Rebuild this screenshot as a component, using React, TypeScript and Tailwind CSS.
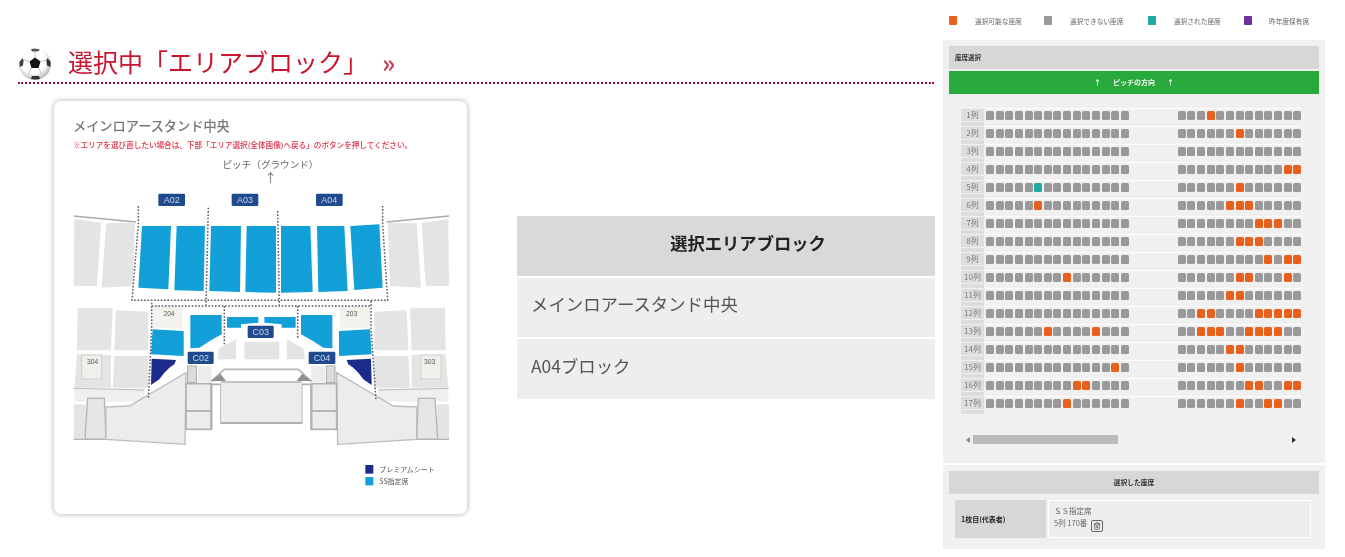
import { Trash2 } from "lucide-react";

const JP = "font-['Noto_Sans_CJK_JP','Noto_Sans',sans-serif]";

// Orange seats per row: [left block, right block], 0 based
const rows: [number[], number[]][] = [
  [[], [3]],
  [[], [6]],
  [[], []],
  [[], [11, 12]],
  [[], [6]],
  [[5], [5, 6, 7]],
  [[], [8, 9, 10]],
  [[], [6, 7, 8]],
  [[], [9, 11, 12]],
  [[8], [6, 7, 11]],
  [[], [5, 6]],
  [[], [2, 3, 8, 9, 10, 11, 12]],
  [[6, 11], [2, 3, 4, 7, 8, 9, 10]],
  [[], [5, 6]],
  [[13], [6]],
  [[9, 10], [7, 8, 11, 12]],
  [[8], [6, 9, 10]],
];

const legend = [
  { color: "bg-[#e8601c]", label: "選択可能な座席", width: "w-[95px]", pad: "pl-[18px]" },
  { color: "bg-[#999999]", label: "選択できない座席", width: "w-[104px]", pad: "pl-[18px]" },
  { color: "bg-[#1fa9a6]", label: "選択された座席", width: "w-[96px]", pad: "pl-[18px]" },
  { color: "bg-[#7030a0]", label: "昨年度保有席", width: "w-[66px]", pad: "pl-[17px]" },
];

const Seat = ({ color }: { color: string }) => (
  <span className={`block w-[8px] h-[9px] rounded-[1.5px] shrink-0 ${color}`} />
);

const SeatRow = ({ no, left, right }: { no: number; left: number[]; right: number[] }) => {
  const seatColor = (block: "l" | "r", i: number) => {
    if (block === "l" && no === 5 && i === 5) return "bg-[#1fa9a6]";
    const list = block === "l" ? left : right;
    return list.includes(i) ? "bg-[#e8601c]" : "bg-[#999999]";
  };

  return (
    <div className="flex h-[18px]">
      <div className="w-[23px] mr-[2px] flex flex-col gap-[1px]">
        <div className="h-[12px] mt-[1px] bg-[#dddddd] text-[8px] leading-[12px] text-center text-[#777777]">
          {no}列
        </div>
        <div className="h-[4px] bg-[#dddddd]" />
      </div>
      <div className="w-[315px] border-t border-white flex pt-[2px] gap-[49px]">
        <div className="flex gap-[1.63px]">
          {Array.from({ length: 15 }).map((_, i) => (
            <Seat key={i} color={seatColor("l", i)} />
          ))}
        </div>
        <div className="flex gap-[1.63px]">
          {Array.from({ length: 13 }).map((_, i) => (
            <Seat key={i} color={seatColor("r", i)} />
          ))}
        </div>
      </div>
    </div>
  );
};

const SoccerBall = () => (
  <svg width="34" height="34" viewBox="0 0 34 34" className="shrink-0">
    <defs>
      <radialGradient id="ball" cx="45%" cy="40%" r="60%">
        <stop offset="0.65" stopColor="#ffffff" />
        <stop offset="1" stopColor="#b5b5b5" />
      </radialGradient>
    </defs>
    <circle cx="17" cy="17" r="16" fill="url(#ball)" />
    <path d="M17 10.5 L22.5 14.5 L20.5 21 L13.5 21 L11.5 14.5 Z" fill="#111" />
    <path d="M13 2 L17 1.4 L22 2.4 L20 4.6 L14 4.6 Z" fill="#555" />
    <path d="M29.5 11 L32.6 15 L32.4 20 L29 18.5 L28.4 13.5 Z" fill="#333" />
    <path d="M4.5 11 L1.4 15 L1.6 20 L5 18.5 L5.6 13.5 Z" fill="#444" />
    <path d="M13 32 L14 29 L21 29 L22 32 L17 32.6 Z" fill="#333" />
    <path d="M17 10.5 L17 5 M22.5 14.5 L28 13 M11.5 14.5 L6 13 M13.5 21 L10.5 27 M20.5 21 L23.5 27" stroke="#aaa" strokeWidth="0.7" />
  </svg>
);

// left half of the stand, drawn again mirrored for the right side
const GRAY = [
  "40,85 120,95 108,285 38,285",
  "135,97 222,95 215,285 122,290",
  "50,350 155,352 150,478 48,478",
  "165,358 262,362 262,478 160,478",
  "48,490 150,492 150,590 40,590",
  "160,495 262,495 262,590 155,590",
  "475,472 525,445 525,505 470,505",
];

const BLUE_TOP = [
  "243,105 330,105 322,295 232,290",
  "347,105 432,105 428,300 340,298",
  "450,105 540,105 537,303 445,300",
  "557,105 645,105 645,305 553,303",
  "660,105 748,105 755,303 660,305",
  "768,105 850,105 860,300 772,303",
  "868,105 955,100 965,290 880,297",
];

const MapLabel = ({ x, y, w, text }: { x: number; y: number; w: number; text: string }) => (
  <g>
    <rect x={x} y={y} width={w} height="37" rx="4" fill="#1f4a8e" />
    <text x={x + w / 2} y={y + 27} textAnchor="middle" fontSize="27" fill="#c8d6ea" fontFamily="Liberation Sans, sans-serif">
      {text}
    </text>
  </g>
);

const HalfStand = () => (
  <g>
    <path d="M38 75 L225 93" stroke="#aaaaaa" strokeWidth="4" fill="none" />
    {GRAY.map((p) => (
      <polygon key={p} points={p} fill="#e4e4e4" />
    ))}
    <rect x="275" y="345" width="90" height="65" fill="#f3f2ec" />
    <polygon points="275,415 368,420 368,495 270,490" fill="#13a0d8" />
    <polygon points="388,372 482,372 482,430 450,448 415,470 388,472" fill="#13a0d8" />
    <polygon points="498,378 592,378 592,395 540,400 540,410 498,410" fill="#13a0d8" />
    <polygon points="272,503 345,507 340,520 325,530 310,545 295,565 270,582" fill="#1c2a8c" />
    <rect x="62" y="492" width="60" height="72" fill="#f0efe9" stroke="#cfcfcf" strokeWidth="3" />

    {/* concourse bands and the corner blocks */}
    <rect x="40" y="592" width="210" height="40" fill="#efefef" />
    <path d="M38 592 L250 597" stroke="#bdbdbd" strokeWidth="3" fill="none" />
    <rect x="38" y="640" width="37" height="105" fill="#e4e4e4" />
    <polygon points="80,622 130,622 135,745 72,745" fill="#e6e6e6" stroke="#b5b5b5" strokeWidth="4" />
    <path d="M38 745 L135 745" stroke="#b5b5b5" strokeWidth="4" />

    <polygon points="135,648 205,645 375,545 372,760 135,745" fill="#ececec" stroke="#bdbdbd" strokeWidth="4" />
    <rect x="410" y="525" width="42" height="48" fill="#ececec" />
    <rect x="380" y="525" width="26" height="50" fill="#dcdcdc" stroke="#aaaaaa" strokeWidth="3" />
    <rect x="375" y="578" width="75" height="82" fill="#ececec" stroke="#b0b0b0" strokeWidth="5" />
    <rect x="375" y="660" width="75" height="55" fill="#ececec" stroke="#b0b0b0" strokeWidth="5" />
    <path d="M452 716 L452 580 L480 580 L480 700" stroke="#b0b0b0" strokeWidth="5" fill="#ffffff" />
    <path d="M450 572 L490 535 L601 535" stroke="#b5b5b5" strokeWidth="5" fill="none" />
    <polygon points="450,570 478,548 495,570" fill="#8f8f8f" />
    <path d="M480 573 L601 573" stroke="#b0b0b0" strokeWidth="5" fill="none" />
  </g>
);

const StadiumMap = () => (
  <svg width="400" height="320" viewBox="0 0 1200 960" className="ml-[7px] shrink-0">
    <HalfStand />
    <g transform="translate(1202 0) scale(-1 1)">
      <HalfStand />
    </g>
    <rect x="480" y="576" width="242" height="120" fill="#ececec" />
    <path d="M480 696 L722 696" stroke="#b0b0b0" strokeWidth="6" />
    <rect x="550" y="452" width="105" height="53" fill="#e4e4e4" />
    {BLUE_TOP.map((p) => (
      <polygon key={p} points={p} fill="#13a0d8" />
    ))}
    <g stroke="#5f5f6a" strokeWidth="4.5" strokeDasharray="5 5" fill="none">
      <path d="M232 45 L232 100 L213 328 L980 328 L965 100 L965 45" />
      <path d="M442 50 L435 342" />
      <path d="M650 60 L655 342" />
      <path d="M272 335 L272 410 L262 625" />
      <path d="M272 345 L930 345" />
      <path d="M930 330 L930 410 L945 628" />
      <path d="M490 345 L490 460" />
      <path d="M710 345 L710 440" />
    </g>
    <MapLabel x={292} y={8} w={80} text="A02" />
    <MapLabel x={512} y={8} w={80} text="A03" />
    <MapLabel x={765} y={8} w={80} text="A04" />
    <MapLabel x={560} y={404} w={78} text="C03" />
    <MapLabel x={380} y={482} w={78} text="C02" />
    <MapLabel x={743} y={482} w={80} text="C04" />
    <g fontSize="20" fill="#555555" textAnchor="middle" fontFamily="Liberation Sans, sans-serif">
      <text x="324" y="375">204</text>
      <text x="872" y="375">203</text>
      <text x="95" y="520">304</text>
      <text x="1106" y="520">303</text>
    </g>
    <rect x="913" y="822" width="24" height="26" fill="#1c2a8c" />
    <rect x="913" y="858" width="24" height="25" fill="#13a0d8" />
    <g fontSize="21" fill="#555555" fontFamily="Noto Sans CJK JP, sans-serif">
      <text x="955" y="843">プレミアムシート</text>
      <text x="955" y="878">SS指定席</text>
    </g>
  </svg>
);

export default function App() {
  return (
    <div className={`flex w-[1345px] h-[557px] overflow-hidden bg-white blur-[0.5px] ${JP}`}>
      {/* left side */}
      <div className="w-[943px] shrink-0 pl-[18px] pt-[47px]">
        <div className="w-[916px] h-[37px] border-b-2 border-dotted border-[#a01030] flex items-start">
          <SoccerBall />
          <h1 className="ml-[16px] -mt-[2px] text-[25px] leading-[32px] text-[#c8162e]">選択中「エリアブロック」</h1>
          <span className="ml-[14px] -mt-[1px] text-[25px] leading-[32px] font-bold text-[#c8405a]">»</span>
        </div>

        <div className="flex items-center ml-[35px] mt-[16px]">
          <div className="w-[415px] h-[415px] shrink-0 flex flex-col rounded-lg border border-[#dddddd] shadow-[0_0_4px_rgba(0,0,0,0.25)]">
            <div className="pl-[19px] pt-[15px] text-[13.2px] leading-[19px] text-[#777777] font-medium">
              メインロアースタンド中央
            </div>
            <div className="pl-[19px] mt-[4px] text-[7.6px] leading-[12px] font-medium text-[#e0304a] whitespace-nowrap">
              ※エリアを選び直したい場合は、下部「エリア選択(全体画像)へ戻る」のボタンを押してください。
            </div>
            <div className="text-center mt-[6px] pl-[20px] text-[9.6px] leading-[14px] text-[#666666]">
              ピッチ（グラウンド）
            </div>
            <div className="text-center pl-[20px] text-[12px] leading-[14px] text-[#666666]">↑</div>
            <div className="mt-[6px]">
              <StadiumMap />
            </div>
          </div>

          <div className="w-[418px] ml-[49px] flex flex-col gap-[2px]">
            <div className="h-[60px] bg-[#d9d9d9] flex items-center justify-center pl-[44px] pb-[6px] text-[17.3px] font-bold text-[#222222]">
              選択エリアブロック
            </div>
            <div className="h-[59px] bg-[#eeeeee] flex items-center pl-[14px] pb-[6px] text-[17.4px] text-[#555555]">
              メインロアースタンド中央
            </div>
            <div className="h-[60px] bg-[#eeeeee] flex items-center pl-[14px] pb-[6px] text-[17.4px] text-[#555555]">
              A04ブロック
            </div>
          </div>
        </div>
      </div>

      {/* right side */}
      <div className="w-[382px] shrink-0">
        <div className="h-[40px] flex items-center pl-[6px] pt-[2px]">
          {legend.map((item) => (
            <div key={item.label} className={`flex items-center ${item.width} shrink-0`}>
              <span className={`block w-[8px] h-[9px] rounded-[1px] shrink-0 ${item.color}`} />
              <span className={`${item.pad} text-[6.7px] text-[#666666] whitespace-nowrap`}>{item.label}</span>
            </div>
          ))}
        </div>

        <div className="h-[423px] bg-[#f0f0f0] px-[6px] pt-[6px]">
          <div className="h-[23px] bg-[#d7d7d7] flex items-center pl-[6px] text-[6.5px] font-bold text-[#333333]">
            座席選択
          </div>
          <div className="h-[23px] mt-[2px] bg-[#28a93b] flex items-center justify-center gap-[12px] text-[7px] font-bold text-white">
            <span>↑</span>
            <span>ピッチの方向</span>
            <span>↑</span>
          </div>
          <div className="mt-[14px] ml-[12px]">
            {rows.map(([left, right], i) => (
              <SeatRow key={i} no={i + 1} left={left} right={right} />
            ))}
          </div>
          <div className="mt-[21px] ml-[17px] h-[9px] w-[330px] flex items-center">
            <span className="w-0 h-0 border-y-[3px] border-y-transparent border-r-[4px] border-r-[#888888]" />
            <span className="ml-[3px] w-[145px] h-[9px] bg-[#bbbbbb]" />
            <span className="ml-auto w-0 h-0 border-y-[3px] border-y-transparent border-l-[4px] border-l-[#333333]" />
          </div>
        </div>

        <div className="mt-[2px] h-[84px] bg-[#f0f0f0] px-[6px] pt-[6px]">
          <div className="h-[23px] bg-[#d7d7d7] flex items-center justify-center text-[6.8px] font-bold text-[#333333]">
            選択した座席
          </div>
          <div className="mt-[6px] ml-[6px] w-[356px] h-[38px] flex">
            <div className="w-[91px] bg-[#d7d7d7] flex items-center pl-[6px] text-[7px] font-bold text-[#222222]">
              1枚目(代表者)
            </div>
            <div className="ml-[2px] flex-1 bg-[#eeeeee] border border-white pl-[5px] pt-[4px] text-[7.5px] leading-[12px] text-[#666666]">
              <div>ＳＳ指定席</div>
              <div className="flex items-start">
                <span className="whitespace-nowrap">5列 170番</span>
                <span className="ml-[4px] mt-[3px] w-[12px] h-[12px] flex items-center justify-center border border-[#666666] rounded-[2px]">
                  <Trash2 className="w-[8px] h-[8px] text-[#444444]" />
                </span>
              </div>
            </div>
          </div>
        </div>
      </div>
    </div>
  );
}
